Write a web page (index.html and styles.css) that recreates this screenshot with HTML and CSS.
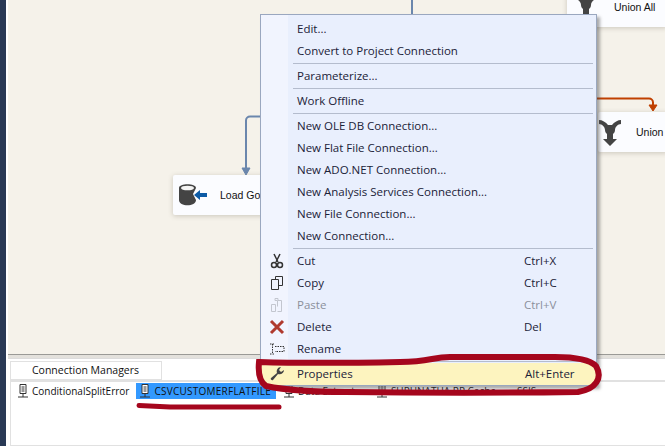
FILE: index.html
```html
<!DOCTYPE html>
<html>
<head>
<meta charset="utf-8">
<title>Connection manager menu</title>
<link rel="stylesheet" href="styles.css">
</head>
<body>
<div class="app">
  <div class="rail"></div>
  <div class="main">
    <div class="canvas">
      <svg class="flows" width="657" height="350" viewBox="0 0 657 350">
        <path d="M404 0V14" fill="none" stroke="#6b87ad" stroke-width="2"/>
        <path d="M252 116.500H242a4 4 0 0 0-4 4V170" fill="none" stroke="#6b87ad" stroke-width="2"/>
        <path d="M238 175l-4-7h8z" fill="#6b87ad" stroke="#6b87ad"/>
        <path d="M589 98.500H641a4 4 0 0 1 4 4V106" fill="none" stroke="#c04000" stroke-width="2"/>
        <path d="M645 111l-4-6h8z" fill="#c04000" stroke="#c04000"/>
      </svg>
      <div class="node node-load">
        <svg class="node-icon" width="30" height="22" viewBox="0 0 30 22">
          <path d="M0 4c0-5 17-5 17 0l-3 6 3 6c0 7-17 7-17 0z" fill="#444"/>
          <ellipse cx="8.500" cy="4" rx="6.500" ry="2.300" fill="#f4f4f4"/>
          <path d="M15 11l6-5v3h7v4h-7v3z" fill="#0d5ba6"/>
        </svg>
        <span class="node-label">Load Gol</span>
      </div>
      <div class="node node-union-all">
        <svg class="union-icon" width="22" height="27" viewBox="0 0 22 27">
          <path d="M0 1c3 0 7 2 9 5h4c2-3 6-5 9-5v4c-3 0-6 3-6 6 0 2-1 3-2 4v5h4l-7 7-7-7h4v-5c-1-1-2-2-2-4 0-3-3-6-6-6z" fill="#444"/>
        </svg>
        <span class="node-label">Union All</span>
      </div>
      <div class="node node-union">
        <svg class="union-icon" width="22" height="27" viewBox="0 0 22 27">
          <path d="M0 1c3 0 7 2 9 5h4c2-3 6-5 9-5v4c-3 0-6 3-6 6 0 2-1 3-2 4v5h4l-7 7-7-7h4v-5c-1-1-2-2-2-4 0-3-3-6-6-6z" fill="#444"/>
        </svg>
        <span class="node-label">Union</span>
      </div>
    </div>
    <div class="splitter"></div>
    <div class="tray">
      <div class="tab">Connection Managers</div>
      <div class="managers">
        <div class="manager">
          <svg class="conn-icon" width="12" height="15" viewBox="0 0 12 15"><path d="M3 .5h6v9H3zM4.500 3h3M4.500 5h3M4.500 7h3M6 9.500V13M1 13h10" fill="none" stroke="#333"/></svg>
          <span>ConditionalSplitError</span>
        </div>
        <div class="manager manager-selected">
          <svg class="conn-icon" width="12" height="15" viewBox="0 0 12 15"><path d="M3 .5h6v9H3z" fill="#fff" stroke="#333"/><path d="M4.500 3h3M4.500 5h3M4.500 7h3M6 9.500V13M1 13h10" fill="none" stroke="#333"/></svg>
          <span>CSVCUSTOMERFLATFILE</span>
        </div>
        <div class="manager manager-data">
          <svg class="conn-icon" width="12" height="15" viewBox="0 0 12 15"><path d="M3 .5h6v9H3zM4.500 3h3M4.500 5h3M4.500 7h3M6 9.500V13M1 13h10" fill="none" stroke="#333"/></svg>
          <span>Data Extract</span>
        </div>
        <div class="manager manager-hidden">
          <svg class="conn-icon" width="12" height="15" viewBox="0 0 12 15"><path d="M3 .5h6v9H3zM4.500 3h3M4.500 5h3M4.500 7h3M6 9.500V13M1 13h10" fill="none" stroke="#333"/></svg>
          <span>SUPHNATHA.RP.Cache</span>
        </div>
        <div class="manager manager-last">
          <span>SSIS</span>
        </div>
      </div>
    </div>
  </div>

  <div class="menu">
    <div class="item"><span class="label">Edit...</span></div>
    <div class="item"><span class="label">Convert to Project Connection</span></div>
    <div class="sep"></div>
    <div class="item"><span class="label">Parameterize...</span></div>
    <div class="sep"></div>
    <div class="item"><span class="label">Work Offline</span></div>
    <div class="sep"></div>
    <div class="item"><span class="label">New OLE DB Connection...</span></div>
    <div class="item"><span class="label">New Flat File Connection...</span></div>
    <div class="item"><span class="label">New ADO.NET Connection...</span></div>
    <div class="item"><span class="label">New Analysis Services Connection...</span></div>
    <div class="item"><span class="label">New File Connection...</span></div>
    <div class="item"><span class="label">New Connection...</span></div>
    <div class="sep"></div>
    <div class="item">
      <svg class="menu-icon" width="16" height="16" viewBox="0 0 16 16"><path d="M5 1l4 8M11 1L7 9" fill="none" stroke="#333" stroke-width="1.500"/><circle cx="5" cy="12" r="2.500" fill="none" stroke="#333" stroke-width="1.500"/><circle cx="11" cy="12" r="2.500" fill="none" stroke="#333" stroke-width="1.500"/></svg>
      <span class="label">Cut</span><span class="key">Ctrl+X</span>
    </div>
    <div class="item">
      <svg class="menu-icon" width="16" height="16" viewBox="0 0 16 16"><path d="M6.500 4V1.500h7v9H10M2.500 4.500h7v10h-7z" fill="none" stroke="#333"/></svg>
      <span class="label">Copy</span><span class="key">Ctrl+C</span>
    </div>
    <div class="item item-disabled">
      <svg class="menu-icon" width="16" height="16" viewBox="0 0 16 16"><path d="M2.500 7.500h4v7h-4zM8.500 9.500V3.500H6v-2h3v2h3.500v11h-4" fill="none" stroke="#c3c6cf"/></svg>
      <span class="label">Paste</span><span class="key">Ctrl+V</span>
    </div>
    <div class="item">
      <svg class="menu-icon" width="16" height="16" viewBox="0 0 16 16"><path d="M2 2l12 12M14 2L2 14" fill="none" stroke="#b03a2e" stroke-width="3"/></svg>
      <span class="label">Delete</span><span class="key">Del</span>
    </div>
    <div class="item">
      <svg class="menu-icon" width="16" height="16" viewBox="0 0 16 16"><path d="M1 3h5M1 13h5M3.500 3v10M6 5.500h9v5H6" fill="none" stroke="#333" stroke-dasharray="1.500 1"/></svg>
      <span class="label">Rename</span>
    </div>
    <div class="sep"></div>
    <div class="item item-active">
      <svg class="menu-icon" width="16" height="16" viewBox="0 0 16 16"><path d="M15 4c0 3-3 5-6 4l-5 6c-1 1-3-1-2-2l6-5c-1-3 1-6 4-6l-2 3 2 2z" fill="#444"/></svg>
      <span class="label">Properties</span><span class="key">Alt+Enter</span>
    </div>
  </div>

  <svg class="annotation" width="665" height="446" viewBox="0 0 665 446">
    <path d="M259 362C258 372 259 381 266 386C290 391 320 392 345 392C430 393 500 393 578 392C596 389 603 378 596 366C588 358 570 357 555 357L450 357C432 357 430 362 400 362C350 363 290 363 259 362Z" fill="none" stroke="#a5061d" stroke-width="6"/>
    <path d="M139 405.500L170 407H279" fill="none" stroke="#a5061d" stroke-width="5" stroke-linecap="round"/>
  </svg>
</div>
</body>
</html>
```

FILE: styles.css
```css
* { box-sizing: border-box; }
html, body { margin: 0; padding: 0; }
body { width: 665px; height: 446px; overflow: hidden; background: #fff; font-family: "Open Sans", "Noto Sans", sans-serif; }

.app { position: relative; display: flex; width: 665px; height: 446px; overflow: hidden; }
.rail { flex: 0 0 6px; background: #293955; }
.main { flex: 1; display: flex; flex-direction: column; padding-left: 2px; min-width: 0; }

.canvas { position: relative; flex: 0 0 354px; background: #f5f2ea; }
.flows { position: absolute; left: 0; top: 0; }
.node { position: absolute; display: flex; align-items: center; height: 40px; background: #fbfcff; border-radius: 2px; box-shadow: 0 1px 5px rgba(80, 70, 50, .25); font-family: "Liberation Sans", sans-serif; font-size: 10.500px; color: #111; white-space: nowrap; }
.node-load { left: 165px; top: 175px; width: 110px; padding-left: 6px; }
.node-load .node-label { margin-left: 11px; }
.node-union-all { left: 559px; top: -13px; width: 100px; padding-left: 8px; }
.node-union-all .node-label { margin-left: 17px; }
.node-union { left: 590px; top: 112px; width: 70px; padding-left: 1px; }
.node-union .node-label { margin-left: 15px; }

.splitter { flex: 0 0 5px; background: #e3e1dc; border-top: 1px solid #9a9a96; border-bottom: 1px solid #dcdcdc; }

.tray { flex: 1; display: flex; flex-direction: column; padding: 2px 0 0 2px; background: #fff; }
.tab { width: 152px; height: 19px; padding-left: 21px; border: 1px solid #e1e1e1; font-size: 10.500px; line-height: 17px; color: #111; }
.managers { flex: 1; display: flex; align-items: flex-start; padding: 1px 0 0 6px; border: 1px solid #e1e1e1; border-top: 2px solid #e1e1e1; border-right: 0; font-size: 10px; color: #111; white-space: nowrap; }
.manager { display: flex; align-items: center; gap: 3px; height: 16px; }
.manager-selected { margin-left: 7px; padding: 0 5px 0 3px; background: #3399ff; letter-spacing: .25px; }
.manager-data { margin-left: 7px; }
.manager-hidden { margin-left: 21px; }
.manager-last { margin-left: 21px; }
.conn-icon { flex: none; }

.menu { position: absolute; left: 260px; top: 14px; width: 337px; padding: 3px 1px 0; border: 1px solid #9aa7bf; background: linear-gradient(to right, #f1f4fe 27px, #e9effd 27px); box-shadow: 3px 3px 3px rgba(70, 70, 70, .45); font-size: 11.500px; color: #1b2238; }
.item { position: relative; display: flex; align-items: center; height: 22px; padding: 0 21px 2px 35px; white-space: nowrap; }
.label { flex: 1; }
.key { flex: 0 0 50px; }
.sep { height: 1px; margin: 1px 2px 1px 31px; background: #b4bccd; }
.item-disabled { color: #8b8f9b; }
.item-active { margin: 0 -1px; padding: 0 21px 2px 36px; background: #fdf4bf; }
.menu-icon { position: absolute; left: 7px; top: 3px; }
.item-active .menu-icon { left: 8px; }

.annotation { position: absolute; left: 0; top: 0; pointer-events: none; }
```
